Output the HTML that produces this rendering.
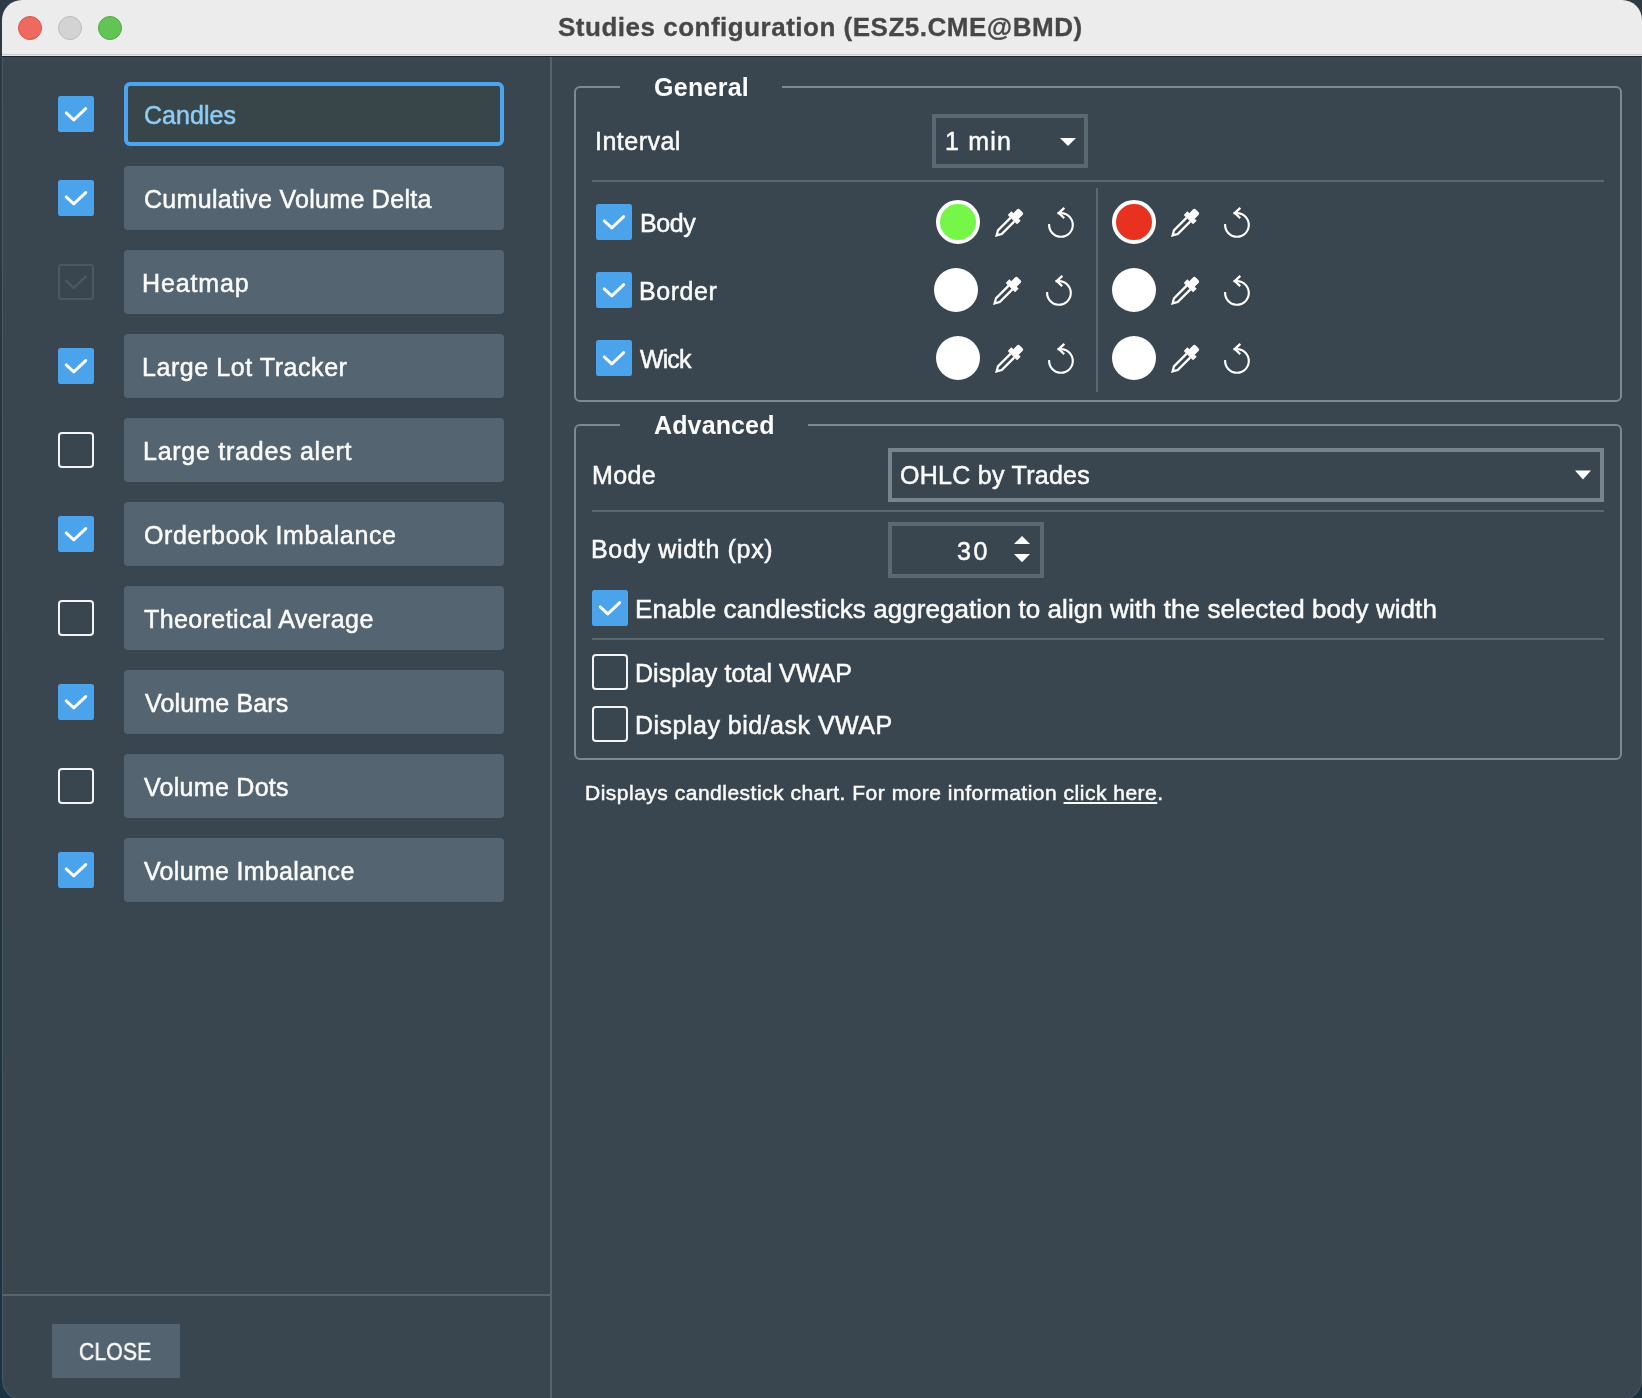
<!DOCTYPE html>
<html><head><meta charset="utf-8">
<style>
html,body{margin:0;padding:0;width:1642px;height:1398px;overflow:hidden;background:linear-gradient(#2f3b44 0%,#26343e 40%,#1a3344 100%);position:relative;}
*{box-sizing:border-box;}
.a{position:absolute;}
.t{position:absolute;white-space:nowrap;will-change:transform;-webkit-text-stroke:0.5px currentColor;font-family:"Liberation Sans",sans-serif;color:#fbfbfb;font-size:25px;line-height:25px;}
.b{font-weight:bold;-webkit-text-stroke:0;}
#win{position:absolute;left:2px;top:0;width:1640px;height:1400px;border-radius:20px;overflow:hidden;background:#39464f;}
.tl{position:absolute;top:16px;width:24px;height:24px;border-radius:50%;}
.item{position:absolute;left:124px;width:380px;height:64px;border-radius:4px;background:#546571;}
.cb{position:absolute;width:36px;height:36px;border-radius:2.5px;background:#4ba3ec;}
.cbu{position:absolute;width:36px;height:36px;border-radius:4px;border:2px solid #f4f4f4;}
.cbd{position:absolute;width:36px;height:36px;border-radius:3px;border:2px solid #4a5860;}
.grp{position:absolute;border:2px solid #7b8990;border-radius:6px;}
.circ{position:absolute;width:44px;height:44px;border-radius:50%;background:#fff;}
</style></head><body>

<div id="win"><div class="a" style="left:0;top:0;width:1640px;height:54px;background:#ececec;"></div><div class="a" style="left:0;top:54px;width:1640px;height:1px;background:#c9c9c9;"></div><div class="a" style="left:0;top:55px;width:1640px;height:1px;background:#e9e9e9;"></div><div class="a" style="left:0;top:56px;width:1640px;height:1px;background:#1d262b;"></div><div class="a" style="left:0;top:57px;width:1640px;height:1343px;border:1px solid #4c5860;border-top:none;border-radius:0 0 20px 20px;"></div></div>
<div class="tl" style="left:18px;background:#ee6a5e;border:1px solid #d9544a;"></div>
<div class="tl" style="left:58px;background:#d3d3d3;border:1px solid #bcbcbc;"></div>
<div class="tl" style="left:98px;background:#61c454;border:1px solid #52a942;"></div>
<div class="t b" style="left:558.0px;top:14px;font-size:26px;line-height:26px;letter-spacing:0.507px;color:#474747;-webkit-text-stroke:0.3px #474747;">Studies configuration (ESZ5.CME@BMD)</div>
<div class="a" style="left:550px;top:57px;width:2px;height:1341px;background:#56646c;"></div>
<div class="a" style="left:2px;top:1294px;width:548px;height:2px;background:#56646c;"></div>
<div class="a" style="left:124px;top:82px;width:380px;height:64px;border-radius:6px;border:4px solid #4ca5f0;background:#384549;"></div>
<div class="t" style="left:143.6px;top:103px;font-size:25px;line-height:25px;letter-spacing:0.034px;color:#8ecbf6;">Candles</div>
<div class="cb" style="left:58px;top:96px"></div>
<svg class="a" style="left:58px;top:96px" width="36" height="36" viewBox="0 0 36 36"><path d="M8.2 16.9 L15.8 23.9 L27.7 12.6" fill="none" stroke="#ffffff" stroke-width="2.9" stroke-linecap="round" stroke-linejoin="round"/></svg>
<div class="item" style="top:166px"></div>
<div class="t" style="left:143.6px;top:187px;font-size:25px;line-height:25px;letter-spacing:0.308px;">Cumulative Volume Delta</div>
<div class="cb" style="left:58px;top:180px"></div>
<svg class="a" style="left:58px;top:180px" width="36" height="36" viewBox="0 0 36 36"><path d="M8.2 16.9 L15.8 23.9 L27.7 12.6" fill="none" stroke="#ffffff" stroke-width="2.9" stroke-linecap="round" stroke-linejoin="round"/></svg>
<div class="item" style="top:250px"></div>
<div class="t" style="left:142.4px;top:271px;font-size:25px;line-height:25px;letter-spacing:0.867px;">Heatmap</div>
<div class="cbd" style="left:58px;top:264px"></div>
<svg class="a" style="left:58px;top:264px" width="36" height="36" viewBox="0 0 36 36"><path d="M8.2 16.9 L15.8 23.9 L27.7 12.6" fill="none" stroke="#4a5860" stroke-width="2.5" stroke-linecap="round" stroke-linejoin="round"/></svg>
<div class="item" style="top:334px"></div>
<div class="t" style="left:142.4px;top:355px;font-size:25px;line-height:25px;letter-spacing:0.562px;">Large Lot Tracker</div>
<div class="cb" style="left:58px;top:348px"></div>
<svg class="a" style="left:58px;top:348px" width="36" height="36" viewBox="0 0 36 36"><path d="M8.2 16.9 L15.8 23.9 L27.7 12.6" fill="none" stroke="#ffffff" stroke-width="2.9" stroke-linecap="round" stroke-linejoin="round"/></svg>
<div class="item" style="top:418px"></div>
<div class="t" style="left:142.6px;top:439px;font-size:25px;line-height:25px;letter-spacing:0.742px;">Large trades alert</div>
<div class="cbu" style="left:58px;top:432px"></div>
<div class="item" style="top:502px"></div>
<div class="t" style="left:143.6px;top:523px;font-size:25px;line-height:25px;letter-spacing:0.644px;">Orderbook Imbalance</div>
<div class="cb" style="left:58px;top:516px"></div>
<svg class="a" style="left:58px;top:516px" width="36" height="36" viewBox="0 0 36 36"><path d="M8.2 16.9 L15.8 23.9 L27.7 12.6" fill="none" stroke="#ffffff" stroke-width="2.9" stroke-linecap="round" stroke-linejoin="round"/></svg>
<div class="item" style="top:586px"></div>
<div class="t" style="left:144.0px;top:607px;font-size:25px;line-height:25px;letter-spacing:0.411px;">Theoretical Average</div>
<div class="cbu" style="left:58px;top:600px"></div>
<div class="item" style="top:670px"></div>
<div class="t" style="left:144.6px;top:691px;font-size:25px;line-height:25px;letter-spacing:0.160px;">Volume Bars</div>
<div class="cb" style="left:58px;top:684px"></div>
<svg class="a" style="left:58px;top:684px" width="36" height="36" viewBox="0 0 36 36"><path d="M8.2 16.9 L15.8 23.9 L27.7 12.6" fill="none" stroke="#ffffff" stroke-width="2.9" stroke-linecap="round" stroke-linejoin="round"/></svg>
<div class="item" style="top:754px"></div>
<div class="t" style="left:144.4px;top:775px;font-size:25px;line-height:25px;letter-spacing:0.280px;">Volume Dots</div>
<div class="cbu" style="left:58px;top:768px"></div>
<div class="item" style="top:838px"></div>
<div class="t" style="left:144.4px;top:859px;font-size:25px;line-height:25px;letter-spacing:0.307px;">Volume Imbalance</div>
<div class="cb" style="left:58px;top:852px"></div>
<svg class="a" style="left:58px;top:852px" width="36" height="36" viewBox="0 0 36 36"><path d="M8.2 16.9 L15.8 23.9 L27.7 12.6" fill="none" stroke="#ffffff" stroke-width="2.9" stroke-linecap="round" stroke-linejoin="round"/></svg>
<div class="a" style="left:52px;top:1324px;width:128px;height:54px;background:#536470;"></div>
<div class="t" style="left:79.3px;top:1340px;font-size:24px;line-height:24px;letter-spacing:0.300px;transform:scaleX(0.875);transform-origin:0 0;">CLOSE</div>
<div class="grp" style="left:574px;top:86px;width:1048px;height:316px;"></div>
<div class="a" style="left:620px;top:84px;width:162px;height:6px;background:#39464f;"></div>
<div class="t b" style="left:653.8px;top:75px;font-size:25px;line-height:25px;letter-spacing:0.283px;">General</div>
<div class="t" style="left:595.0px;top:129px;font-size:25px;line-height:25px;letter-spacing:0.485px;">Interval</div>
<div class="a" style="left:932px;top:114px;width:156px;height:54px;border:4px solid #5a6870;"></div>
<div class="t" style="left:944.6px;top:129px;font-size:25px;line-height:25px;letter-spacing:1.200px;">1 min</div>
<svg class="a" style="left:1060px;top:138px" width="16" height="8" viewBox="0 0 16 8"><path d="M0 0 L16 0 L8 8 Z" fill="#fff"/></svg>
<div class="a" style="left:592px;top:180px;width:1012px;height:2px;background:#5a6870;"></div>
<div class="a" style="left:1096px;top:188px;width:2px;height:204px;background:#5a6870;"></div>
<div class="cb" style="left:596px;top:204px"></div>
<svg class="a" style="left:596px;top:204px" width="36" height="36" viewBox="0 0 36 36"><path d="M8.2 16.9 L15.8 23.9 L27.7 12.6" fill="none" stroke="#ffffff" stroke-width="2.9" stroke-linecap="round" stroke-linejoin="round"/></svg>
<div class="t" style="left:639.8px;top:211px;font-size:25px;line-height:25px;letter-spacing:-0.434px;">Body</div>
<div class="cb" style="left:596px;top:272px"></div>
<svg class="a" style="left:596px;top:272px" width="36" height="36" viewBox="0 0 36 36"><path d="M8.2 16.9 L15.8 23.9 L27.7 12.6" fill="none" stroke="#ffffff" stroke-width="2.9" stroke-linecap="round" stroke-linejoin="round"/></svg>
<div class="t" style="left:638.8px;top:279px;font-size:25px;line-height:25px;letter-spacing:0.540px;">Border</div>
<div class="cb" style="left:596px;top:340px"></div>
<svg class="a" style="left:596px;top:340px" width="36" height="36" viewBox="0 0 36 36"><path d="M8.2 16.9 L15.8 23.9 L27.7 12.6" fill="none" stroke="#ffffff" stroke-width="2.9" stroke-linecap="round" stroke-linejoin="round"/></svg>
<div class="t" style="left:640.0px;top:347px;font-size:25px;line-height:25px;letter-spacing:-0.900px;">Wick</div>
<div class="circ" style="left:936px;top:200px;border:4px solid #fff;background:#76f748;"></div>
<div class="circ" style="left:1112px;top:200px;border:4px solid #fff;background:#e8311f;"></div>
<div class="circ" style="left:934px;top:268px;"></div>
<div class="circ" style="left:1112px;top:268px;"></div>
<div class="circ" style="left:936px;top:336px;"></div>
<div class="circ" style="left:1112px;top:336px;"></div>
<svg class="a" style="left:990px;top:202.5px" width="40" height="40" viewBox="0 0 40 40"><g transform="translate(5 34) rotate(45) translate(0 -37.3)" fill="#fff"><path d="M-3.9 8 L-3.9 2.3 Q-3.9 0.3 -1.9 0.3 L1.9 0.3 Q3.9 0.3 3.9 2.3 L3.9 8 Z"/><rect x="-6.6" y="7.6" width="13.2" height="5.1"/><path fill-rule="evenodd" d="M-3.8 12.5 L-3.8 30.7 L0 37.3 L3.8 30.7 L3.8 12.5 Z M-1.45 12.5 L-1.45 30.2 L0 32.8 L1.45 30.2 L1.45 12.5 Z"/></g></svg>
<svg class="a" style="left:1042px;top:202px" width="34" height="40" viewBox="0 0 34 40"><path d="M7.14 22 A11.85 11.85 0 1 0 18.95 11.1 L15.5 11.1" fill="none" stroke="#fff" stroke-width="2.1"/><path d="M22.3 5.8 L16.8 11.1 L22.2 16.2" fill="none" stroke="#fff" stroke-width="2.3" stroke-linejoin="miter"/></svg>
<svg class="a" style="left:1166px;top:202.5px" width="40" height="40" viewBox="0 0 40 40"><g transform="translate(5 34) rotate(45) translate(0 -37.3)" fill="#fff"><path d="M-3.9 8 L-3.9 2.3 Q-3.9 0.3 -1.9 0.3 L1.9 0.3 Q3.9 0.3 3.9 2.3 L3.9 8 Z"/><rect x="-6.6" y="7.6" width="13.2" height="5.1"/><path fill-rule="evenodd" d="M-3.8 12.5 L-3.8 30.7 L0 37.3 L3.8 30.7 L3.8 12.5 Z M-1.45 12.5 L-1.45 30.2 L0 32.8 L1.45 30.2 L1.45 12.5 Z"/></g></svg>
<svg class="a" style="left:1218px;top:202px" width="34" height="40" viewBox="0 0 34 40"><path d="M7.14 22 A11.85 11.85 0 1 0 18.95 11.1 L15.5 11.1" fill="none" stroke="#fff" stroke-width="2.1"/><path d="M22.3 5.8 L16.8 11.1 L22.2 16.2" fill="none" stroke="#fff" stroke-width="2.3" stroke-linejoin="miter"/></svg>
<svg class="a" style="left:988px;top:270.5px" width="40" height="40" viewBox="0 0 40 40"><g transform="translate(5 34) rotate(45) translate(0 -37.3)" fill="#fff"><path d="M-3.9 8 L-3.9 2.3 Q-3.9 0.3 -1.9 0.3 L1.9 0.3 Q3.9 0.3 3.9 2.3 L3.9 8 Z"/><rect x="-6.6" y="7.6" width="13.2" height="5.1"/><path fill-rule="evenodd" d="M-3.8 12.5 L-3.8 30.7 L0 37.3 L3.8 30.7 L3.8 12.5 Z M-1.45 12.5 L-1.45 30.2 L0 32.8 L1.45 30.2 L1.45 12.5 Z"/></g></svg>
<svg class="a" style="left:1040px;top:270px" width="34" height="40" viewBox="0 0 34 40"><path d="M7.14 22 A11.85 11.85 0 1 0 18.95 11.1 L15.5 11.1" fill="none" stroke="#fff" stroke-width="2.1"/><path d="M22.3 5.8 L16.8 11.1 L22.2 16.2" fill="none" stroke="#fff" stroke-width="2.3" stroke-linejoin="miter"/></svg>
<svg class="a" style="left:1166px;top:270.5px" width="40" height="40" viewBox="0 0 40 40"><g transform="translate(5 34) rotate(45) translate(0 -37.3)" fill="#fff"><path d="M-3.9 8 L-3.9 2.3 Q-3.9 0.3 -1.9 0.3 L1.9 0.3 Q3.9 0.3 3.9 2.3 L3.9 8 Z"/><rect x="-6.6" y="7.6" width="13.2" height="5.1"/><path fill-rule="evenodd" d="M-3.8 12.5 L-3.8 30.7 L0 37.3 L3.8 30.7 L3.8 12.5 Z M-1.45 12.5 L-1.45 30.2 L0 32.8 L1.45 30.2 L1.45 12.5 Z"/></g></svg>
<svg class="a" style="left:1218px;top:270px" width="34" height="40" viewBox="0 0 34 40"><path d="M7.14 22 A11.85 11.85 0 1 0 18.95 11.1 L15.5 11.1" fill="none" stroke="#fff" stroke-width="2.1"/><path d="M22.3 5.8 L16.8 11.1 L22.2 16.2" fill="none" stroke="#fff" stroke-width="2.3" stroke-linejoin="miter"/></svg>
<svg class="a" style="left:990px;top:338.5px" width="40" height="40" viewBox="0 0 40 40"><g transform="translate(5 34) rotate(45) translate(0 -37.3)" fill="#fff"><path d="M-3.9 8 L-3.9 2.3 Q-3.9 0.3 -1.9 0.3 L1.9 0.3 Q3.9 0.3 3.9 2.3 L3.9 8 Z"/><rect x="-6.6" y="7.6" width="13.2" height="5.1"/><path fill-rule="evenodd" d="M-3.8 12.5 L-3.8 30.7 L0 37.3 L3.8 30.7 L3.8 12.5 Z M-1.45 12.5 L-1.45 30.2 L0 32.8 L1.45 30.2 L1.45 12.5 Z"/></g></svg>
<svg class="a" style="left:1042px;top:338px" width="34" height="40" viewBox="0 0 34 40"><path d="M7.14 22 A11.85 11.85 0 1 0 18.95 11.1 L15.5 11.1" fill="none" stroke="#fff" stroke-width="2.1"/><path d="M22.3 5.8 L16.8 11.1 L22.2 16.2" fill="none" stroke="#fff" stroke-width="2.3" stroke-linejoin="miter"/></svg>
<svg class="a" style="left:1166px;top:338.5px" width="40" height="40" viewBox="0 0 40 40"><g transform="translate(5 34) rotate(45) translate(0 -37.3)" fill="#fff"><path d="M-3.9 8 L-3.9 2.3 Q-3.9 0.3 -1.9 0.3 L1.9 0.3 Q3.9 0.3 3.9 2.3 L3.9 8 Z"/><rect x="-6.6" y="7.6" width="13.2" height="5.1"/><path fill-rule="evenodd" d="M-3.8 12.5 L-3.8 30.7 L0 37.3 L3.8 30.7 L3.8 12.5 Z M-1.45 12.5 L-1.45 30.2 L0 32.8 L1.45 30.2 L1.45 12.5 Z"/></g></svg>
<svg class="a" style="left:1218px;top:338px" width="34" height="40" viewBox="0 0 34 40"><path d="M7.14 22 A11.85 11.85 0 1 0 18.95 11.1 L15.5 11.1" fill="none" stroke="#fff" stroke-width="2.1"/><path d="M22.3 5.8 L16.8 11.1 L22.2 16.2" fill="none" stroke="#fff" stroke-width="2.3" stroke-linejoin="miter"/></svg>
<div class="grp" style="left:574px;top:424px;width:1048px;height:336px;"></div>
<div class="a" style="left:620px;top:422px;width:188px;height:6px;background:#39464f;"></div>
<div class="t b" style="left:653.8px;top:413px;font-size:25px;line-height:25px;letter-spacing:0.136px;">Advanced</div>
<div class="t" style="left:591.6px;top:463px;font-size:25px;line-height:25px;letter-spacing:0.367px;">Mode</div>
<div class="a" style="left:888px;top:448px;width:716px;height:54px;border:4px solid #76858d;"></div>
<div class="t" style="left:899.8px;top:463px;font-size:25px;line-height:25px;letter-spacing:0.277px;">OHLC by Trades</div>
<svg class="a" style="left:1575px;top:470px" width="16" height="10" viewBox="0 0 16 10"><path d="M0 0.5 L16 0.5 L8 9.5 Z" fill="#fff"/></svg>
<div class="a" style="left:592px;top:510px;width:1012px;height:2px;background:#5a6870;"></div>
<div class="t" style="left:591.2px;top:537px;font-size:25px;line-height:25px;letter-spacing:0.671px;">Body width (px)</div>
<div class="a" style="left:888px;top:522px;width:156px;height:56px;border:4px solid #5a6870;"></div>
<div class="t" style="left:956.8px;top:539px;font-size:25px;line-height:25px;letter-spacing:2.500px;">30</div>
<svg class="a" style="left:1014px;top:536px" width="16" height="27" viewBox="0 0 16 27"><path d="M0 8 L16 8 L8 0 Z M0 18 L16 18 L8 26.3 Z" fill="#fff"/></svg>
<div class="cb" style="left:592px;top:590px"></div>
<svg class="a" style="left:592px;top:590px" width="36" height="36" viewBox="0 0 36 36"><path d="M8.2 16.9 L15.8 23.9 L27.7 12.6" fill="none" stroke="#ffffff" stroke-width="2.9" stroke-linecap="round" stroke-linejoin="round"/></svg>
<div class="t" style="left:635.0px;top:596px;font-size:26px;line-height:26px;letter-spacing:0.059px;">Enable candlesticks aggregation to align with the selected body width</div>
<div class="a" style="left:592px;top:638px;width:1012px;height:2px;background:#5a6870;"></div>
<div class="cbu" style="left:592px;top:654px"></div>
<div class="t" style="left:635.2px;top:661px;font-size:25px;line-height:25px;letter-spacing:0.064px;">Display total VWAP</div>
<div class="cbu" style="left:592px;top:706px"></div>
<div class="t" style="left:635.2px;top:713px;font-size:25px;line-height:25px;letter-spacing:0.489px;">Display bid/ask VWAP</div>
<div class="t" style="left:585.0px;top:782px;font-size:21px;line-height:21px;letter-spacing:0.501px;">Displays candlestick chart. For more information <span style="text-decoration:underline;">click here</span>.</div>
</body></html>
